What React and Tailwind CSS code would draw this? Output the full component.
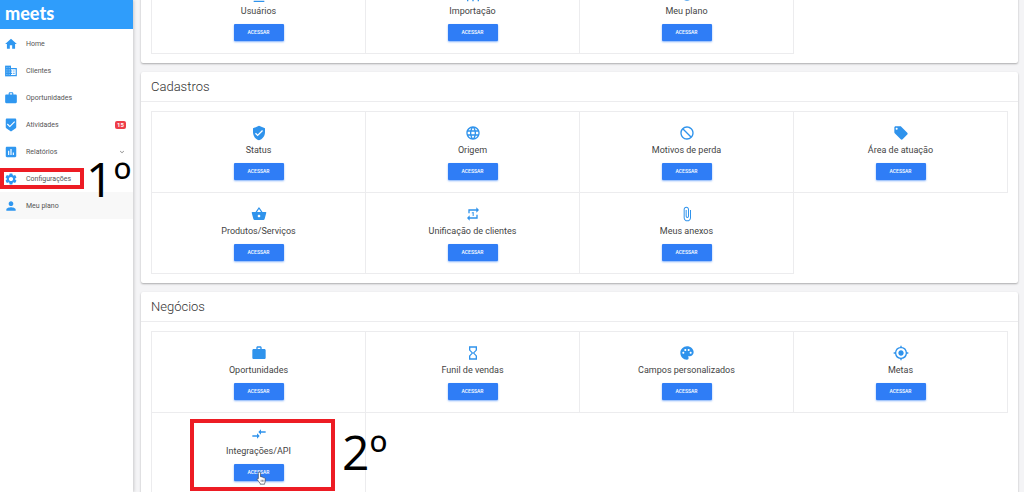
import React from "react";
import {
  MdHome,
  MdWork,
  MdBeenhere,
  MdAssessment,
  MdSettings,
  MdPerson,
  MdExpandMore,
  MdVerifiedUser,
  MdLanguage,
  MdNotInterested,
  MdLocalOffer,
  MdShoppingBasket,
  MdRepeatOne,
  MdAttachFile,
  MdHourglassEmpty,
  MdPalette,
  MdMyLocation,
  MdCompareArrows,
  MdContacts,
  MdSettingsInputComponent,
  MdStars,
} from "react-icons/md";

function BuildingIcon({ className }) {
  return (
    <svg viewBox="0 0 24 24" className={className} fill="currentColor" aria-hidden="true">
      <path d="M2 3h10v18H2z" opacity="0.6" />
      <path d="M12 7V3H2v18h20V7H12zM6 19H4v-2h2v2zm0-4H4v-2h2v2zm0-4H4V9h2v2zm0-4H4V5h2v2zm4 12H8v-2h2v2zm0-4H8v-2h2v2zm0-4H8V9h2v2zm0-4H8V5h2v2zm10 12h-8v-2h2v-2h-2v-2h2v-2h-2V9h8v10zm-2-8h-2v2h2v-2zm0 4h-2v2h2v-2z" />
    </svg>
  );
}

const menu = [
  { label: "Home", icon: MdHome },
  { label: "Clientes", icon: BuildingIcon },
  { label: "Oportunidades", icon: MdWork },
  { label: "Atividades", icon: MdBeenhere, badge: "15" },
  { label: "Relatórios", icon: MdAssessment, expandable: true },
  { label: "Configurações", icon: MdSettings, step: "1º" },
  { label: "Meu plano", icon: MdPerson, active: true },
];

const sections = [
  {
    id: "conta",
    cards: [
      { label: "Usuários", icon: MdContacts },
      { label: "Importação", icon: MdSettingsInputComponent },
      { label: "Meu plano", icon: MdStars },
    ],
  },
  {
    id: "cadastros",
    title: "Cadastros",
    cards: [
      { label: "Status", icon: MdVerifiedUser },
      { label: "Origem", icon: MdLanguage },
      { label: "Motivos de perda", icon: MdNotInterested },
      { label: "Área de atuação", icon: MdLocalOffer },
      { label: "Produtos/Serviços", icon: MdShoppingBasket },
      { label: "Unificação de clientes", icon: MdRepeatOne },
      { label: "Meus anexos", icon: MdAttachFile },
    ],
  },
  {
    id: "negocios",
    title: "Negócios",
    cards: [
      { label: "Oportunidades", icon: MdWork },
      { label: "Funil de vendas", icon: MdHourglassEmpty },
      { label: "Campos personalizados", icon: MdPalette },
      { label: "Metas", icon: MdMyLocation },
      { label: "Integrações/API", icon: MdCompareArrows, step: "2º" },
    ],
  },
];

function HandCursor() {
  return (
    <svg viewBox="0 0 16 20" className="absolute top-[7px] left-[22px] h-[14px] w-[11px]" aria-hidden="true">
      <path
        d="M5 1.5c1 0 1.6.7 1.6 1.6v5l.6-.1c.8 0 1.3.3 1.6.8.9-.3 1.8 0 2.2.8 1.3-.2 2.5.5 2.5 2v3.2c0 1-.8 2-1 3.2v1H6v-1.2C5 16.5 3 14 1.8 12.3c-.7-1.1.7-2.2 1.6-1.3V3.1c0-.9.6-1.6 1.6-1.6z"
        fill="#fff"
        stroke="#3b4252"
        strokeWidth="1"
      />
      <path d="M7.5 12.5v3M9.5 12.5v3M11.5 12.5v3" stroke="#3b4252" strokeWidth="0.8" />
    </svg>
  );
}

function Sidebar() {
  return (
    <aside className="relative z-10 w-[133px] shrink-0 bg-white shadow-[1px_0_3px_rgba(0,0,0,0.18)]">
      <header className="flex h-[29px] items-center bg-[#2f9dfb] px-[5px]">
        <a href="#inicio" className="pb-1 font-[Lato] text-lg leading-6 font-black text-white">
          meets
        </a>
      </header>
      <nav className="pt-px">
        {menu.map(({ label, icon: Icon, badge, expandable, active, step }) => (
          <a
            key={label}
            href="#menu"
            className={
              active
                ? "relative flex h-[27px] items-center gap-2 bg-[#f8f8f8] pr-[7px] pl-1"
                : "relative flex h-[27px] items-center gap-2 pr-[7px] pl-1"
            }
          >
            <Icon className="h-[14px] w-[14px] shrink-0 text-[#2f97f0]" />
            <span className="grow text-[7px] leading-3 text-[#555]">{label}</span>
            {badge && (
              <span className="rounded-xs bg-[#ee3d48] px-[2px] text-[6px] leading-[8px] font-bold text-white">
                {badge}
              </span>
            )}
            {expandable && <MdExpandMore className="h-2 w-2 text-[#777]" />}
            {step && (
              <>
                <span className="absolute top-[3px] left-0 h-[21px] w-[84px] border-4 border-[#ed1c24]" />
                <span className="absolute -top-[10px] left-[86px] z-10 font-['Open_Sans'] text-5xl leading-[48px] whitespace-nowrap text-black">
                  {step}
                </span>
              </>
            )}
          </a>
        ))}
      </nav>
    </aside>
  );
}

function Card({ label, icon: Icon, step }) {
  return (
    <div className="relative flex h-[81px] flex-col items-center border-r border-b border-[#ececee] pt-[13px]">
      <Icon className="h-4 w-4 text-[#2f93ec]" />
      <h3 className="mt-[3px] text-[9px] leading-3 text-[#444]">{label}</h3>
      <button
        type="button"
        className="relative mt-[7px] h-[17px] w-[50px] rounded-[1px] bg-[#2f7df6] text-[5px] leading-none font-medium text-white shadow-[0_1px_2px_rgba(47,125,246,0.6)]"
      >
        ACESSAR
        {step && <HandCursor />}
      </button>
      {step && (
        <>
          <span className="absolute top-[6px] left-[38px] h-[72px] w-[145px] border-4 border-[#ed1c24]" />
          <span className="absolute top-[15px] left-[190px] z-10 font-['Open_Sans'] text-5xl leading-[48px] whitespace-nowrap text-black">
            {step}
          </span>
        </>
      )}
    </div>
  );
}

function Section({ title, cards }) {
  return (
    <section className="rounded-xs bg-white shadow-[0_1px_2px_rgba(0,0,0,0.3)]">
      {title && (
        <h2 className="h-[30px] border-b border-[#ececee] px-[10px] text-[13px] leading-[30px] font-light text-[#333]">
          {title}
        </h2>
      )}
      <div className="px-[10px] py-[9px]">
        <div className="grid grid-cols-4 border-t border-l border-[#ececee]">
          {cards.map((card) => (
            <Card key={card.label} {...card} />
          ))}
        </div>
      </div>
    </section>
  );
}

export default function App() {
  return (
    <div className="flex h-screen overflow-hidden bg-[#f4f4f6] font-[Roboto,sans-serif]">
      <Sidebar />
      <main className="-mt-[37px] flex min-w-0 grow flex-col gap-[9px] pr-[6px] pl-2">
        {sections.map((section) => (
          <Section key={section.id} {...section} />
        ))}
      </main>
    </div>
  );
}
